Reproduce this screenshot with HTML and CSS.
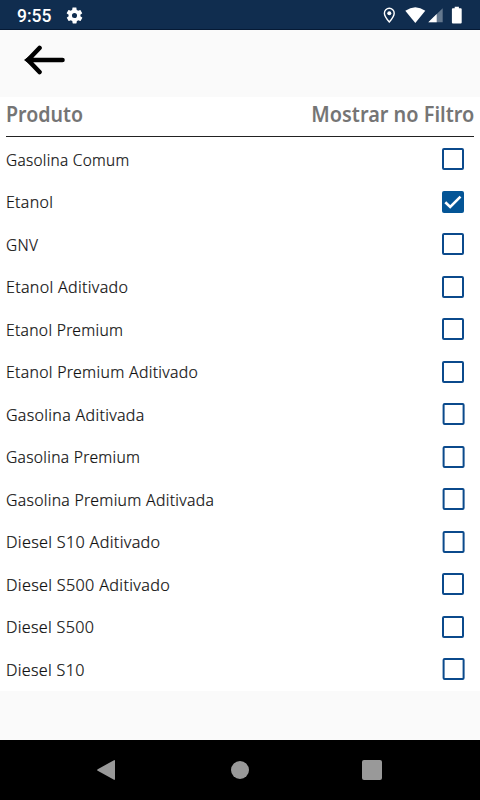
FILE: index.html
```html
<!DOCTYPE html>
<html lang="pt-BR">
<head>
<meta charset="utf-8">
<title>Produtos</title>
<link rel="stylesheet" href="styles.css">
</head>
<body>
<header class="status">
  <span class="clock">9:55</span>
  <svg class="gear" viewBox="0 0 24 24"><path d="M19.4 13c.1-.3.1-.7.1-1s0-.7-.1-1l2.1-1.6c.2-.2.3-.4.1-.6l-2-3.5c-.1-.2-.4-.3-.6-.2l-2.500 1c-.5-.4-1.100-.7-1.700-1l-.4-2.600c0-.3-.2-.5-.5-.5h-4c-.2 0-.4.2-.5.4l-.4 2.700c-.6.2-1.100.6-1.700 1l-2.500-1c-.2-.1-.5 0-.6.200l-2 3.500c-.1.2-.1.500.1.600L4.600 11c-.1.300-.1.700-.1 1s0 .7.1 1l-2.100 1.600c-.2.200-.3.400-.1.600l2 3.500c.1.200.4.300.6.200l2.500-1c.5.400 1.100.7 1.700 1l.4 2.600c0 .3.2.5.5.5h4c.2 0 .4-.2.5-.4l.4-2.700c.6-.2 1.100-.6 1.700-1l2.500 1c.2.100.5 0 .6-.2l2-3.500c.1-.2.1-.5-.1-.6zM12 15.200a3.200 3.200 0 1 1 0-6.400 3.200 3.200 0 0 1 0 6.400z"/></svg>
  <svg class="tray" viewBox="0 0 90 30">
    <path class="pin" d="M9.300 8.300a4.900 4.900 0 0 0-4.900 4.900c0 3.200 4.900 8.800 4.900 8.800s4.900-5.600 4.900-8.800a4.900 4.900 0 0 0-4.900-4.900z"/>
    <circle cx="9.300" cy="13.200" r="2"/>
    <path d="M25.300 10.700Q35.300 3.600 45.300 10.700L35.300 23z"/>
    <path class="faint" d="M62.700 8.200V22.300H48.300z"/>
    <path d="M56.700 14.100V22.300H48.300z"/>
    <path d="M74.700 6.700h4.200v1.500h1.800q1 0 1 1v13.200q0 1-1 1h-7.800q-1 0-1-1V9.200q0-1 1-1h1.800z"/>
  </svg>
</header>
<nav class="toolbar">
  <svg class="back" viewBox="0 0 42 30"><path d="M15.500 3L4 15 15.500 27M4 15H38.500"/><path class="tip" d="M0 15L9 8.500V21.500z"/></svg>
</nav>
<main class="list">
  <div class="head"><span class="h-product">Produto</span><span class="h-filter">Mostrar no Filtro</span></div>
  <div class="row"><span class="w1">Gasolina Comum</span><i class="box"></i></div>
  <div class="row"><span class="w2">Etanol</span><i class="box checked"><svg viewBox="0 0 22 22"><path d="M3.300 11.200L8.200 16 18.500 5.700"/></svg></i></div>
  <div class="row"><span class="w3">GNV</span><i class="box"></i></div>
  <div class="row"><span class="w4">Etanol Aditivado</span><i class="box"></i></div>
  <div class="row"><span class="w5">Etanol Premium</span><i class="box"></i></div>
  <div class="row"><span class="w6">Etanol Premium Aditivado</span><i class="box"></i></div>
  <div class="row"><span class="w7">Gasolina Aditivada</span><i class="box shift"></i></div>
  <div class="row"><span class="w8">Gasolina Premium</span><i class="box shift"></i></div>
  <div class="row"><span class="w9">Gasolina Premium Aditivada</span><i class="box shift"></i></div>
  <div class="row"><span class="w10">Diesel S10 Aditivado</span><i class="box shift"></i></div>
  <div class="row"><span class="w11">Diesel S500 Aditivado</span><i class="box"></i></div>
  <div class="row"><span class="w12">Diesel S500</span><i class="box"></i></div>
  <div class="row"><span class="w13">Diesel S10</span><i class="box shift"></i></div>
</main>
<footer class="navbar">
  <svg viewBox="0 0 480 60"><path d="M97.700 29.200L114 20.200q1-.4 1 .7V39.100q0 1.100-1 .7L97.700 30.800q-1.200-.8 0-1.600z"/><circle cx="240" cy="30" r="9"/><rect x="362" y="20" width="20" height="20" rx="2"/></svg>
</footer>
</body>
</html>
```
FILE: styles.css
```css
* { box-sizing: border-box; }
body {
  margin: 0;
  width: 480px;
  height: 800px;
  display: flex;
  flex-direction: column;
  overflow: hidden;
  background: #fafafa;
  font-family: "Noto Sans", "Open Sans", sans-serif;
}
.status {
  height: 30px;
  flex: none;
  display: flex;
  align-items: center;
  padding-left: 17px;
  background: #102d4f;
  border-bottom: 1px solid #061a35;
  color: #fff;
}
.clock { font: 500 17.500px/30px Roboto, sans-serif; width: 48px; padding-top: 2px; }
.gear { width: 19px; height: 19px; fill: #fff; margin-top: 1px; }
.tray { flex: none; width: 90px; height: 30px; margin-left: auto; margin-right: 10px; fill: #fff; }
.tray .pin { fill: none; stroke: #fff; stroke-width: 1.4; }
.tray .faint { fill: #64788e; }
.toolbar { height: 67px; flex: none; padding: 15px 0 0 24px; }
.back { display: block; width: 42px; height: 30px; fill: none; stroke: #000; stroke-width: 4.600; stroke-linecap: round; stroke-linejoin: round; }
.back .tip { fill: #000; stroke: none; }
.list { height: 594px; flex: none; background: #fff; padding: 0 6px; }
.head {
  height: 39.500px;
  display: flex;
  justify-content: space-between;
  line-height: 33px;
  font-size: 22px;
  font-weight: 600;
  color: #757575;
  border-bottom: 1px solid #222;
  margin-bottom: 1.500px;
  white-space: nowrap;
}
.h-product { transform: scaleX(.89); transform-origin: left; }
.h-filter { transform: scaleX(.904); transform-origin: right; }
.row {
  height: 42.500px;
  display: flex;
  align-items: center;
  justify-content: space-between;
  padding-right: 10px;
  font-size: 16.500px;
  font-weight: 350;
  letter-spacing: .32px;
  -webkit-text-stroke: .2px #111;
  color: #111;
  white-space: nowrap;
}
.row span { transform-origin: left; }
.w1 { transform: scaleX(.93); }
.w2 { transform: scaleX(.965); }
.w3 { transform: scaleX(.93); }
.w4 { transform: scaleX(.972); }
.w5 { transform: scaleX(.947); }
.w6 { transform: scaleX(.957); }
.w7 { transform: scaleX(.968); }
.w8 { transform: scaleX(.944); }
.w9 { transform: scaleX(.954); }
.w10 { transform: scaleX(.98); }
.w11 { transform: scaleX(.98); }
.w12, .w13 { transform: scaleX(.975); }
.box { width: 22px; height: 22px; border: 2px solid #0b4a8c; border-radius: 2px; flex: none; }
.box.shift { transform: translateX(.6px); }
.box.checked { background: #045596; border: 0; }
.box svg { display: block; width: 22px; height: 22px; fill: none; stroke: #fff; stroke-width: 2.600; }
.navbar { height: 60px; flex: none; margin-top: auto; background: #000; }
.navbar svg { display: block; width: 480px; height: 60px; fill: #999; }
```
